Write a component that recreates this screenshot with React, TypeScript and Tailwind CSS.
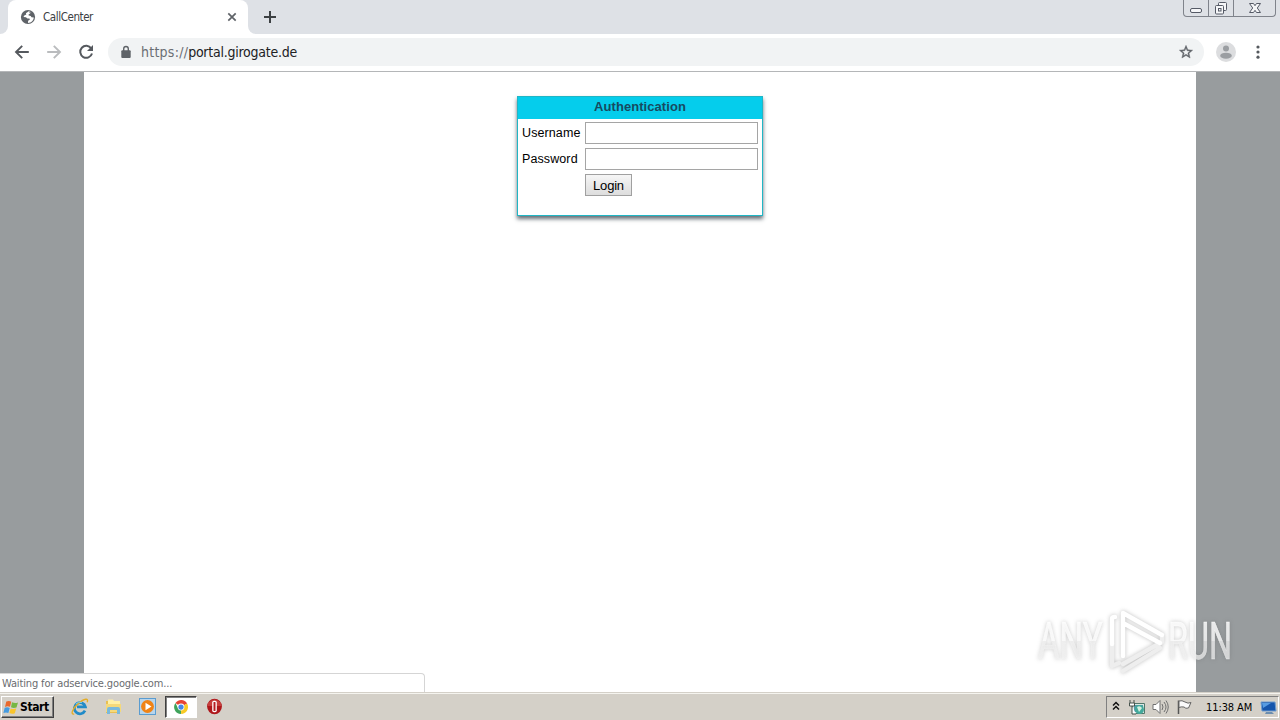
import React from "react";

function TabStrip() {
  return (
    <div className="flex h-[34px] shrink-0 items-start bg-[#dee1e6]">
      <div className="h-[34px] w-2 bg-white">
        <div className="h-full rounded-br-lg bg-[#dee1e6]" />
      </div>
      <div className="flex h-[34px] w-[240px] items-center rounded-t-lg bg-white pl-3">
        <svg width="16" height="16" viewBox="0 0 16 16">
          <circle cx="8" cy="8" r="7.1" fill="#5f6368" />
          <path d="M8.8 2.2 5.9 4.3l.4 1.3-2 .8-.8 1.7 2.4.2 1.6 1.3 2-.1.3 1.2-1.7 1-.1 2.3c3.4-.4 5.6-2.8 5.8-5.6l-2.3-.1-.9-1.6-2-.2.2-1.5 2-.5.5-1.3z" fill="white" />
          <path d="m9 3 2.8.5 1.8 3-2-.5-1.4 1-.8-1.2 1.1-1z" fill="#5f6368" />
        </svg>
        <span className="ml-[7px] w-[183px] whitespace-nowrap pt-[2px] text-[11.5px] tracking-[-0.42px] text-[#3c4043]">CallCenter</span>
        <svg width="12" height="12" viewBox="0 0 12 12">
          <path d="m2.3 2.3 7.4 7.4M9.7 2.3 2.3 9.7" stroke="#5f6368" strokeWidth="1.7" />
        </svg>
      </div>
      <div className="h-[34px] w-2 bg-white">
        <div className="h-full rounded-bl-lg bg-[#dee1e6]" />
      </div>
      <svg width="14" height="14" viewBox="0 0 14 14" className="ml-[7px] mt-[10px]">
        <path d="M7 1v12M1 7h12" stroke="#3c4043" strokeWidth="2" />
      </svg>
      <div className="ml-auto mr-[4px] flex h-[17px] w-[93px] rounded-b-[4px] border border-t-0 border-[#7f838b]">
        <div className="flex w-[25px] justify-center border-r border-[#7f838b]">
          <svg width="14" height="16" viewBox="0 0 14 16"><rect x="1.5" y="8.5" width="11" height="4" rx="1.5" fill="#f5f6f8" stroke="#555a66" /></svg>
        </div>
        <div className="flex w-[25px] justify-center border-r border-[#7f838b]">
          <svg width="14" height="16" viewBox="0 0 14 16" fill="#f5f6f8" stroke="#555a66">
            <rect x="4.5" y="2.5" width="8" height="8" rx="1" />
            <rect x="1.5" y="5.5" width="8" height="8.5" rx="1" />
            <rect x="4.5" y="8.5" width="2.5" height="2.5" />
          </svg>
        </div>
        <div className="flex flex-1 justify-center">
          <svg width="14" height="16" viewBox="0 0 14 16"><path d="M1.5 3.5h4L7 5.7l1.5-2.2h4L9.3 8l3.2 4.5h-4L7 10.3l-1.5 2.2h-4L4.7 8z" fill="#f5f6f8" stroke="#555a66" /></svg>
        </div>
      </div>
    </div>
  );
}

function Toolbar() {
  return (
    <div className="flex h-[38px] shrink-0 items-center border-b border-[#b4b6b8] bg-white pb-px">
      <svg width="16" height="16" viewBox="0 0 16 16" className="ml-[14px]" fill="none" stroke="#55595e" strokeWidth="1.9"><path d="M14.8 8H2.5M8.2 1.8 2 8l6.2 6.2" /></svg>
      <svg width="16" height="16" viewBox="0 0 16 16" className="ml-4" fill="none" stroke="#babcbe" strokeWidth="1.9"><path d="M1.2 8h12.3M7.8 1.8 14 8l-6.2 6.2" /></svg>
      <svg width="16" height="16" viewBox="0 0 16 16" className="ml-4" fill="none"><path d="M13.2 4.4A6 6 0 1 0 14 9.5" stroke="#55595e" strokeWidth="2" /><path d="M15 1v6H9z" fill="#55595e" /></svg>
      <div className="ml-[14px] flex h-[28px] w-[1096px] items-center rounded-full bg-[#f1f3f4]">
        <svg width="10" height="14" viewBox="0 0 10 14" className="ml-[13px]"><path d="M2.7 6V3.8a2.3 2.3 0 0 1 4.6 0V6" fill="none" stroke="#5f6368" strokeWidth="1.4" /><rect x=".3" y="5.2" width="9.4" height="7.8" rx="1" fill="#5f6368" /></svg>
        <span className="ml-[10px] whitespace-nowrap text-[14px] leading-5 text-[#202124]"><span className="tracking-[0.25px] text-[#6a6e73]">https://</span><span className="tracking-[-0.25px]">portal.girogate.de</span></span>
        <svg width="16" height="16" viewBox="0 0 24 24" className="ml-auto mr-[10px]" fill="#5f6368"><path d="m22 9.24-7.19-.62L12 2 9.19 8.63 2 9.24l5.46 4.73L5.82 21 12 17.27 18.18 21l-1.63-7.03zM12 15.4l-3.76 2.27 1-4.28-3.32-2.88 4.38-.38L12 6.1l1.71 4.04 4.38.38-3.32 2.88 1 4.28z" stroke="#5f6368" strokeWidth=".6" /></svg>
      </div>
      <svg width="20" height="20" viewBox="0 0 20 20" className="ml-3"><circle cx="10" cy="10" r="10" fill="#dcdddf" /><circle cx="10" cy="6.5" r="3" fill="#9b9ea2" /><ellipse cx="10" cy="13.7" rx="5.8" ry="3" fill="#9b9ea2" /></svg>
      <svg width="6" height="16" viewBox="0 0 6 16" className="ml-[19px]" fill="#55595e"><circle cx="3" cy="3" r="1.6" /><circle cx="3" cy="8" r="1.6" /><circle cx="3" cy="13.2" r="1.6" /></svg>
    </div>
  );
}

function LoginCard() {
  return (
    <form className="h-[120px] w-[246px] border border-[#20b6c5] bg-white font-['Liberation_Sans',sans-serif] text-[13px] text-black shadow-[0_3px_4px_rgba(35,50,60,0.7)]" onSubmit={(e) => e.preventDefault()}>
      <h1 className="h-[22px] bg-[#05cdec] text-center text-[13px] font-bold leading-[19px] tracking-[0.06px] text-[#174a60]">Authentication</h1>
      <div className="flex flex-col gap-1 pl-1 pt-[3px]">
        <label className="flex h-[22px] items-center">
          <span className="w-[63px] whitespace-nowrap pt-px text-[12.5px] tracking-[0.1px]">Username</span>
          <input className="h-[22px] w-[173px] border border-[#a5a5a5] bg-white px-1 outline-none" />
        </label>
        <label className="flex h-[22px] items-center">
          <span className="w-[63px] whitespace-nowrap pt-px text-[12.5px] tracking-[0.1px]">Password</span>
          <input type="password" className="h-[22px] w-[173px] border border-[#a5a5a5] bg-white px-1 outline-none" />
        </label>
        <button className="ml-[63px] h-[22px] w-[47px] border border-[#a0a0a0] bg-linear-to-b from-[#f6f6f6] to-[#dddddd] pt-px text-[13px] leading-5 tracking-[-0.2px]">Login</button>
      </div>
    </form>
  );
}

function Watermark() {
  return (
    <svg className="absolute left-[1030px] top-[604px] overflow-visible" width="240" height="72" viewBox="0 0 240 72" style={{ filter: "drop-shadow(0 0 2px rgba(80,80,80,.36))" }}>
      <defs>
        <linearGradient id="letters" gradientUnits="userSpaceOnUse" x1="0" y1="-37" x2="0" y2="0">
          <stop offset="0" stopColor="#ffffff" stopOpacity=".82" />
          <stop offset=".5" stopColor="#ffffff" stopOpacity=".78" />
          <stop offset=".52" stopColor="#f2f2f2" stopOpacity=".74" />
          <stop offset="1" stopColor="#f2f2f2" stopOpacity=".7" />
        </linearGradient>
      </defs>
      <g fill="url(#letters)" stroke="url(#letters)" strokeWidth=".5" fontFamily="Roboto, sans-serif" fontSize="51">
        <text transform="translate(8 55) scale(.65 1)">ANY</text>
        <text transform="translate(138 55) scale(.635 1)">RUN</text>
      </g>
      <g fill="none" strokeWidth="4.4" strokeLinejoin="round" strokeLinecap="round">
        <path d="M82 40v22l7-3M132 31v7L93 60M93 67l37-23" stroke="#eeeeee" />
        <path d="M93 52V9l39 22M93 19l37 20M82 40V15q0-2 3-2" stroke="#ffffff" />
      </g>
    </svg>
  );
}

function StartFlag() {
  return (
    <svg width="17" height="15" viewBox="0 0 17 15">
      <path d="M3.3 1.5q3-1 5 .3L7 6.8q-2.4-1-5 .1z" fill="#e9692d" />
      <path d="M9 2.3q3 1.5 6 .2l-1.5 5q-3 1-5.5-.2z" fill="#76b743" />
      <path d="M1.7 7.8q2.6-1 5 .2l-1.3 5Q3 12 .4 13z" fill="#459be0" />
      <path d="M7.7 8.4q2.5 1 5.5.1l-1.4 4.7q-2.8 1.2-5.4-.2z" fill="#f9c52c" />
    </svg>
  );
}

function Taskbar() {
  return (
    <div className="flex h-[28px] shrink-0 items-center border-t border-[#d4d0c8] bg-[#d4d0c8] shadow-[inset_0_1px_0_#f5f4ef]">
      <button className="ml-px mt-px flex h-[22px] w-[53px] items-center border border-b-[#404040] border-l-white border-r-[#404040] border-t-white bg-[#d4d0c8] pl-px shadow-[inset_-1px_-1px_0_#808080]">
        <StartFlag />
        <span className="text-[12px] font-bold tracking-[-0.4px] text-black">Start</span>
      </button>
      <svg className="ml-[17px]" width="18" height="18" viewBox="0 0 18 18" fill="none">
        <path d="M14 12.7a5.6 5.6 0 1 1 .4-3.8H6" stroke="#218bc8" strokeWidth="2.7" />
        <path d="M3.2 16C-.8 17 1.2 10.8 7.2 5.6S18-.3 16.2 4.3" stroke="#e4ad26" strokeWidth="1.4" />
        <path d="M4.9 6.1a5 5 0 0 1 6-1.5" stroke="#7ad0f1" />
      </svg>
      <svg className="ml-[16px]" width="17" height="17" viewBox="0 0 17 17">
        <path d="M1 3h5l1 1h8v11H1z" fill="#e8bf52" /><path d="M3 1.5h5L9 3h6v5H3z" fill="#fff0a5" /><path d="M1 6h15v8H1z" fill="#f5d979" /><path d="M2 16V11q0-2 2-2h9q2 0 2 2v5h-3v-4H5v4z" fill="#79b9dc" />
      </svg>
      <svg className="ml-[17px]" width="17" height="17" viewBox="0 0 17 17">
        <rect x=".5" y=".5" width="16" height="16" fill="#b8d5ec" stroke="#5a9cd0" /><circle cx="8.5" cy="8.5" r="6.4" fill="#f08316" /><path d="m6.5 4.7 6 3.8-6 3.8z" fill="white" />
      </svg>
      <div className="ml-[9px] mt-px flex h-[22px] w-[32px] items-center justify-center border border-b-white border-l-[#404040] border-r-white border-t-[#404040] bg-white shadow-[inset_1px_1px_0_#808080]">
        <svg width="14" height="14" viewBox="0 0 24 24">
          <path d="M12 12 2.5 5a12 12 0 0 1 20 1z" fill="#e64435" /><path d="M12 12 22.4 6a12 12 0 0 1-10.2 18z" fill="#f8ca25" /><path d="M12 12v12A12 12 0 0 1 2.5 5L7 14z" fill="#3fa35b" /><circle cx="12" cy="12" r="5.8" fill="white" /><circle cx="12" cy="12" r="4.5" fill="#4587e8" />
        </svg>
      </div>
      <svg className="ml-[9px]" width="17" height="17" viewBox="0 0 17 17"><ellipse cx="8.5" cy="8.5" rx="7.4" ry="7.8" fill="#ae171b" /><path d="M2 5Q8.5-2 15 5v3H2z" fill="#d95a55" fillOpacity=".6" /><rect x="6.2" y="2.7" width="4.6" height="11.6" rx="1.8" fill="white" /><rect x="7.5" y="4" width="2" height="9" rx=".6" fill="#b71c22" /></svg>
      <div className="ml-auto mr-px mt-px flex h-[22px] w-[173px] items-center border border-b-white border-l-[#808080] border-r-white border-t-[#808080]">
        <svg className="ml-[5px]" width="8" height="12" viewBox="0 0 8 12" fill="none" stroke="#111" strokeWidth="1.5"><path d="m1 4.5 3-3 3 3M1 8.5l3-3 3 3" /></svg>
        <svg className="ml-[8px]" width="18" height="17" viewBox="0 0 18 17">
          <path d="M4.5 4.5h12v10h-12z" fill="#dbe8e2" stroke="#51776b" /><path d="M6 6h9v7H6z" fill="#539baa" /><circle cx="11.5" cy="10.5" r="4.5" fill="#43a99b" /><path d="M9 8q3-2 5 1l-3 4z" fill="#d4f0df" /><path d="M2 1v3m4-3v3M1.5 4h5v3h-5zM4 7v8h4" fill="white" stroke="#47534d" />
        </svg>
        <svg className="ml-[6px]" width="17" height="16" viewBox="0 0 17 16" fill="none" stroke="#707070"><path d="M1 5.5h3l4-4v13l-4-4H1z" fill="#fff" /><path d="M10 5q2 3 0 6M12 3q4 5 0 10M14 1.5q4.5 6.5 0 13" /></svg>
        <svg className="ml-[7px]" width="17" height="16" viewBox="0 0 17 16"><path d="M2.5 15V1.5" stroke="#555" strokeWidth="1.5" /><path d="M3 2q3-1 6 1 3 2 6 .5L12.5 9Q9.5 10 8 8 5 7.5 3 8.5z" fill="#fafafa" stroke="#666" /></svg>
        <span className="ml-[13px] w-[47px] whitespace-nowrap pt-[2px] text-[11px] tracking-[-0.1px] text-black">11:38 AM</span>
        <svg className="ml-auto mr-px" width="17" height="15" viewBox="0 0 17 15"><path d="M1 2h14l1 9H2z" fill="#1555ac" stroke="#6f9cce" /><path d="M2 3h9L3 8z" fill="#579ce2" /><path d="M6 12h6l2 2H5z" fill="#6c8eaf" /></svg>
      </div>
    </div>
  );
}

export default function App() {
  return (
    <div className="relative flex h-[720px] w-[1280px] flex-col overflow-hidden font-['DejaVu_Sans_Condensed','DejaVu_Sans',sans-serif]">
      <TabStrip />
      <Toolbar />
      <main className="flex flex-1 justify-center bg-[#989c9e]">
        <div className="flex w-[1112px] items-start justify-center bg-white pt-6">
          <LoginCard />
        </div>
      </main>
      <div className="absolute left-0 top-[673px] flex h-[19px] w-[425px] items-center rounded-tr-[4px] border-r border-t border-[#d5d5d5] bg-white pl-[2px] pt-[2px]">
        <span className="whitespace-nowrap text-[11px] tracking-[-0.14px] text-[#6a6c6f]">Waiting for adservice.google.com...</span>
      </div>
      <Watermark />
      <Taskbar />
    </div>
  );
}
